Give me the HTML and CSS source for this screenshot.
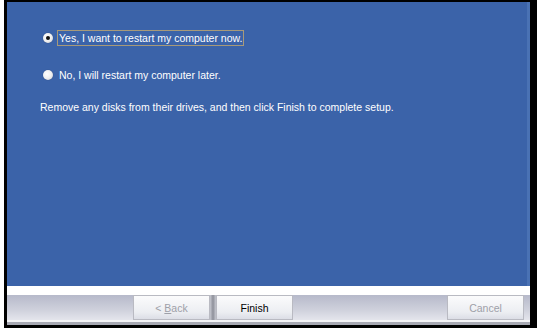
FILE: index.html
```html
<!DOCTYPE html>
<html>
<head>
<meta charset="utf-8">
<link rel="stylesheet" href="styles.css">
</head>
<body>
<div class="frame">
  <div class="panel">
    <div class="option">
      <span class="radio checked"></span>
      <span class="label focus">Yes, I want to restart my computer now.</span>
    </div>
    <div class="option second">
      <span class="radio"></span>
      <span class="label">No, I will restart my computer later.</span>
    </div>
    <p class="note">Remove any disks from their drives, and then click Finish to complete setup.</p>
  </div>
  <div class="footer">
    <div class="bar">
      <div class="btn disabled back"><span>&lt; <u>B</u>ack</span></div>
      <div class="sep"></div>
      <div class="btn finish"><span>Finish</span></div>
      <div class="spacer"></div>
      <div class="btn disabled cancel"><span>Cancel</span></div>
    </div>
  </div>
</div>
</body>
</html>
```
FILE: styles.css
```css
html, body {
  margin: 0;
  padding: 0;
  background: #fff;
  width: 537px;
  height: 328px;
  overflow: hidden;
}
.frame {
  margin-left: 4px;
  width: 523px;
  height: 323px;
  border-left: 3px solid #000;
  border-top: 2px solid #000;
  border-right: 7px solid #000;
  border-bottom: 3px solid #000;
  display: flex;
  flex-direction: column;
  font-family: "Liberation Sans", Arial, sans-serif;
  font-size: 10.5px;
}
.panel {
  height: 284px;
  background: #3b63a9;
  box-shadow: inset -3px 0 0 #4a72b4;
  color: #fff;
  padding: 29px 0 0 33px;
  box-sizing: border-box;
}
.option {
  display: flex;
  align-items: center;
  height: 14px;
}
.option.second {
  margin-top: 23px;
}
.radio {
  width: 10px;
  height: 10px;
  border-radius: 50%;
  background: radial-gradient(circle at 40% 40%, #fff 0, #f0f0f0 50%, #c4c4c8 100%);
  box-shadow: 0 0 1px rgba(0,0,0,0.4);
  margin-left: 3px;
  margin-right: 4px;
  position: relative;
  flex: none;
}
.radio.checked::after {
  content: "";
  position: absolute;
  left: 3px;
  top: 3px;
  width: 4px;
  height: 4px;
  border-radius: 50%;
  background: #111;
}
.label {
  padding: 1px 1px;
  border: 1px solid transparent;
  white-space: nowrap;
}
.label.focus {
  border-color: #a79a7a;
}
.note {
  margin: 18px 0 0 0;
  line-height: 14px;
  white-space: nowrap;
}
.footer {
  flex: 1;
  background: #fff;
  padding-top: 9px;
  box-sizing: border-box;
}
.bar {
  height: 25px;
  background: linear-gradient(#b6b9ca, #cfd1dc 60%, #e4e5ec);
  border-bottom: 2px solid #f4f4f6;
  box-shadow: 0 3px 0 #a7a9b3;
  display: flex;
  align-items: stretch;
  padding-left: 126px;
}
.btn {
  width: 77px;
  box-sizing: border-box;
  border: 1px solid #b9bac2;
  background: linear-gradient(#fbfbfc, #eceef2 70%, #dcdee6);
  display: flex;
  align-items: center;
  justify-content: center;
  font-size: 10.5px;
  color: #000;
  white-space: pre;
}
.btn.disabled {
  color: #9ea0a8;
}
.btn u {
  text-decoration: underline;
}
.sep {
  width: 6px;
  background: linear-gradient(90deg, #c6c8d0, #8e909a 50%, #c6c8d0);
}
.spacer {
  width: 154px;
}
```
